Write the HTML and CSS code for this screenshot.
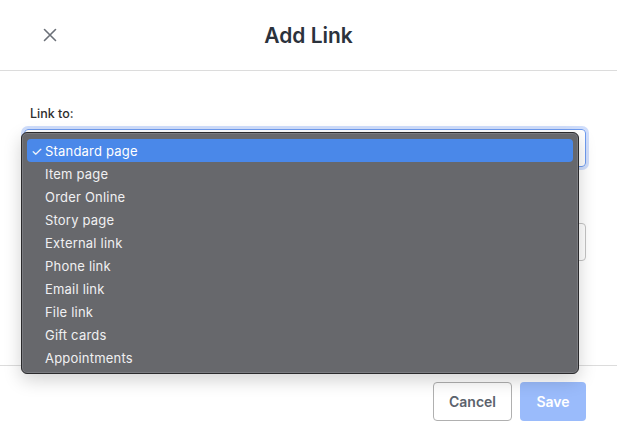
FILE: index.html
```html
<!DOCTYPE html>
<html>
<head>
<meta charset="utf-8">
<link rel="stylesheet" href="styles.css">
</head>
<body>
<div class="modal">
  <header class="head">
    <button class="close" aria-label="Close">
      <svg width="14" height="14" viewBox="0 0 14 14"><path d="M1.5 1.5 L12.5 12.5 M12.5 1.5 L1.5 12.5" stroke="#6b7078" stroke-width="1.6" stroke-linecap="round"/></svg>
    </button>
    <h1 class="title">Add Link</h1>
    <span></span>
  </header>
  <main class="body">
    <div class="field">
      <label class="label">Link to:</label>
      <div class="select focus"></div>
      <ul class="menu">
        <li class="opt sel"><span class="chk">✓</span>Standard page</li>
        <li class="opt"><span class="chk"></span>Item page</li>
        <li class="opt"><span class="chk"></span>Order Online</li>
        <li class="opt"><span class="chk"></span>Story page</li>
        <li class="opt"><span class="chk"></span>External link</li>
        <li class="opt"><span class="chk"></span>Phone link</li>
        <li class="opt"><span class="chk"></span>Email link</li>
        <li class="opt"><span class="chk"></span>File link</li>
        <li class="opt"><span class="chk"></span>Gift cards</li>
        <li class="opt"><span class="chk"></span>Appointments</li>
      </ul>
    </div>
    <div class="field2">
      <div class="input"></div>
    </div>
  </main>
  <footer class="foot">
    <button class="btn cancel">Cancel</button>
    <button class="btn save">Save</button>
  </footer>
</div>
</body>
</html>
```
FILE: styles.css
```css
html, body { margin: 0; padding: 0; background: #fff; }
body { font-family: Inter, "Noto Sans", sans-serif; width: 617px; height: 436px; overflow: hidden; }
.modal { display: flex; flex-direction: column; height: 436px; }
.head {
  height: 71px; box-sizing: border-box; border-bottom: 1px solid #dcdcdc;
  display: grid; grid-template-columns: 1fr auto 1fr; align-items: center;
}
.close { background: none; border: 0; padding: 0; margin-left: 43px; width: 14px; height: 14px; display: flex; justify-self: start; }
.title { margin: 0; font-size: 21px; font-weight: 600; color: #2b323c; letter-spacing: 0; }
.body { position: relative; flex: 1; padding: 35px 31px 0 24px; }
.field { position: relative; }
.label { display: block; font-size: 12.5px; font-weight: 500; color: #2e2e2e; padding-left: 6px; margin-bottom: 8px; }
.select {
  height: 38px; box-sizing: border-box; border: 1px solid #6f9cf0; border-radius: 4px;
  box-shadow: 0 0 0 3px rgba(120, 160, 245, 0.35);
}
.menu {
  position: absolute; left: -3px; top: 26px; width: 558px; margin: 0; padding: 6px 5px 4px 5px; list-style: none;
  box-sizing: border-box; height: 242px;
  background: #67686c; border: 1px solid #2a2a2c; border-radius: 6px;
  box-shadow: inset 0 0 0 1px #7a7b80, 0 6px 18px rgba(0,0,0,0.18);
  z-index: 5;
}
.opt {
  height: 23px; display: flex; align-items: center; color: #f0f0f2; font-size: 13px;
  border-radius: 4px; letter-spacing: 0.2px;
}
.opt.sel { background: #4a88e9; color: #fff; }
.chk { width: 14px; padding-left: 4px; font-size: 13px; }
.field2 { margin-top: 56px; }
.input { height: 38px; box-sizing: border-box; border: 1px solid #c4c4c4; border-radius: 4px; }
.foot {
  border-top: 1px solid #dcdcdc; height: 71px; box-sizing: border-box;
  display: flex; justify-content: flex-end; align-items: flex-start; gap: 8px; padding: 16px 31px 0 0;
}
.btn { height: 39px; border-radius: 4px; font-family: inherit; font-size: 14px; font-weight: 600; }
.cancel { width: 79px; background: #fff; border: 1px solid #b0b0b0; color: #5b626c; }
.save { width: 66px; background: #9abbfb; border: 0; color: #fff; }
```
